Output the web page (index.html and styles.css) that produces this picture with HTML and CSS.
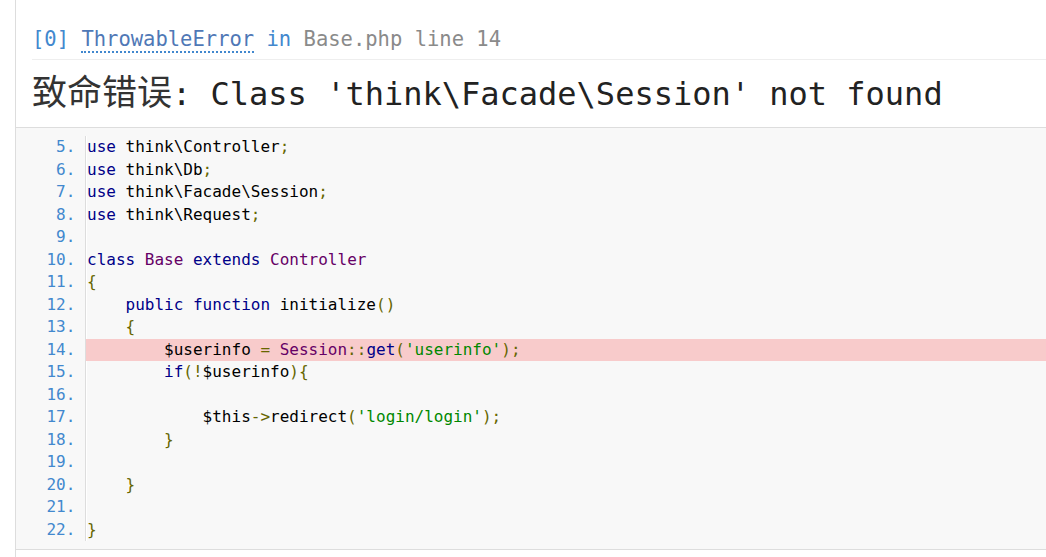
FILE: index.html
```html
<!DOCTYPE html>
<html lang="zh-CN">
<head>
<meta charset="utf-8">
<title>系统发生错误</title>
<link rel="stylesheet" href="styles.css">
</head>
<body>
<div class="page">
  <div class="exception">
    <div class="message">
      <h2>[0] <abbr title="think\exception\ThrowableError">ThrowableError</abbr> in <a class="toggle" title="application/index/controller/Base.php line 14">Base.php line 14</a></h2>
      <h1><span class="cjk">致命错误</span>: Class 'think\Facade\Session' not found</h1>
    </div>
    <div class="source-code">
      <pre class="prettyprint"><ol start="5"><li><code><span class="kwd">use</span><span class="pln"> think\Controller</span><span class="pun">;</span></code></li><li><code><span class="kwd">use</span><span class="pln"> think\Db</span><span class="pun">;</span></code></li><li><code><span class="kwd">use</span><span class="pln"> think\Facade\Session</span><span class="pun">;</span></code></li><li><code><span class="kwd">use</span><span class="pln"> think\Request</span><span class="pun">;</span></code></li><li><code> </code></li><li><code><span class="kwd">class</span><span class="pln"> </span><span class="typ">Base</span><span class="pln"> </span><span class="kwd">extends</span><span class="pln"> </span><span class="typ">Controller</span></code></li><li><code><span class="pun">{</span></code></li><li><code><span class="pln">    </span><span class="kwd">public</span><span class="pln"> </span><span class="kwd">function</span><span class="pln"> initialize</span><span class="pun">()</span></code></li><li><code><span class="pln">    </span><span class="pun">{</span></code></li><li class="line-error"><code><span class="pln">        $userinfo </span><span class="pun">=</span><span class="pln"> </span><span class="typ">Session</span><span class="pun">::</span><span class="kwd">get</span><span class="pun">(</span><span class="str">'userinfo'</span><span class="pun">);</span></code></li><li><code><span class="pln">        </span><span class="kwd">if</span><span class="pun">(!</span><span class="pln">$userinfo</span><span class="pun">){</span></code></li><li><code> </code></li><li><code><span class="pln">            $this</span><span class="pun">-&gt;</span><span class="pln">redirect</span><span class="pun">(</span><span class="str">'login/login'</span><span class="pun">);</span></code></li><li><code><span class="pln">        </span><span class="pun">}</span></code></li><li><code> </code></li><li><code><span class="pln">    </span><span class="pun">}</span></code></li><li><code> </code></li><li><code><span class="pun">}</span></code></li></ol></pre>
    </div>
    <div class="trace"></div>
  </div>
</div>
</body>
</html>
```

FILE: styles.css
```css
html, body {
  margin: 0;
  padding: 0;
  overflow: hidden;
  background: #fff;
}

.page {
  padding-left: 15px;
}

.exception {
  width: 1200px;
  font-family: "DejaVu Sans Mono", "Liberation Mono", "Noto Sans CJK SC", monospace;
}

.message {
  border-left: 1px solid #ddd;
  padding: 12px 16px 15px 16px;
}

.message h2 {
  margin: 0;
  padding: 16px 0 8px;
  font-size: 20.5px;
  line-height: 23px;
  font-weight: 400;
  color: #4288ce;
  border-bottom: 1px solid #eee;
}

.message h2 abbr {
  color: #4f78b6;
  text-decoration: none;
  border-bottom: 2px dotted #4288ce;
}

.message h2 .toggle {
  color: #8a8a8a;
  text-decoration: none;
}

.message h1 {
  margin: 12px 0 0;
  height: 40px;
  font-size: 32px;
  line-height: 40px;
  font-weight: 400;
  color: #222;
}

.message h1 .cjk {
  font-family: "Noto Sans CJK SC", sans-serif;
  font-size: 35px;
  line-height: 1;
  color: #333;
}

.source-code {
  border: 1px solid #ddd;
  background: #f8f8f8;
  padding: 8px 0 8px 7px;
}

.source-code pre {
  margin: 0;
}

.source-code ol {
  margin: 0;
  padding-left: 62px;
  color: #4288ce;
  font-family: "DejaVu Sans Mono", "Liberation Mono", monospace;
  font-size: 16px;
}

.source-code li {
  height: 22.5px;
  line-height: 22.5px;
  border-left: 1px solid #ddd;
}

.source-code li.line-error {
  background: #f8cbcb;
}

.source-code code {
  display: inline-block;
  vertical-align: top;
  height: 100%;
  border-left: 1px solid #fff;
  color: #333;
  font-family: "DejaVu Sans Mono", "Liberation Mono", monospace;
  font-size: 16px;
}

.source-code li.line-error code {
  border-left-color: transparent;
}

.pln { color: #000; }
.kwd { color: #000088; }
.typ { color: #660066; }
.pun { color: #666600; }
.str { color: #008800; }

.trace {
  height: 20px;
  border-left: 1px solid #ddd;
}
```
